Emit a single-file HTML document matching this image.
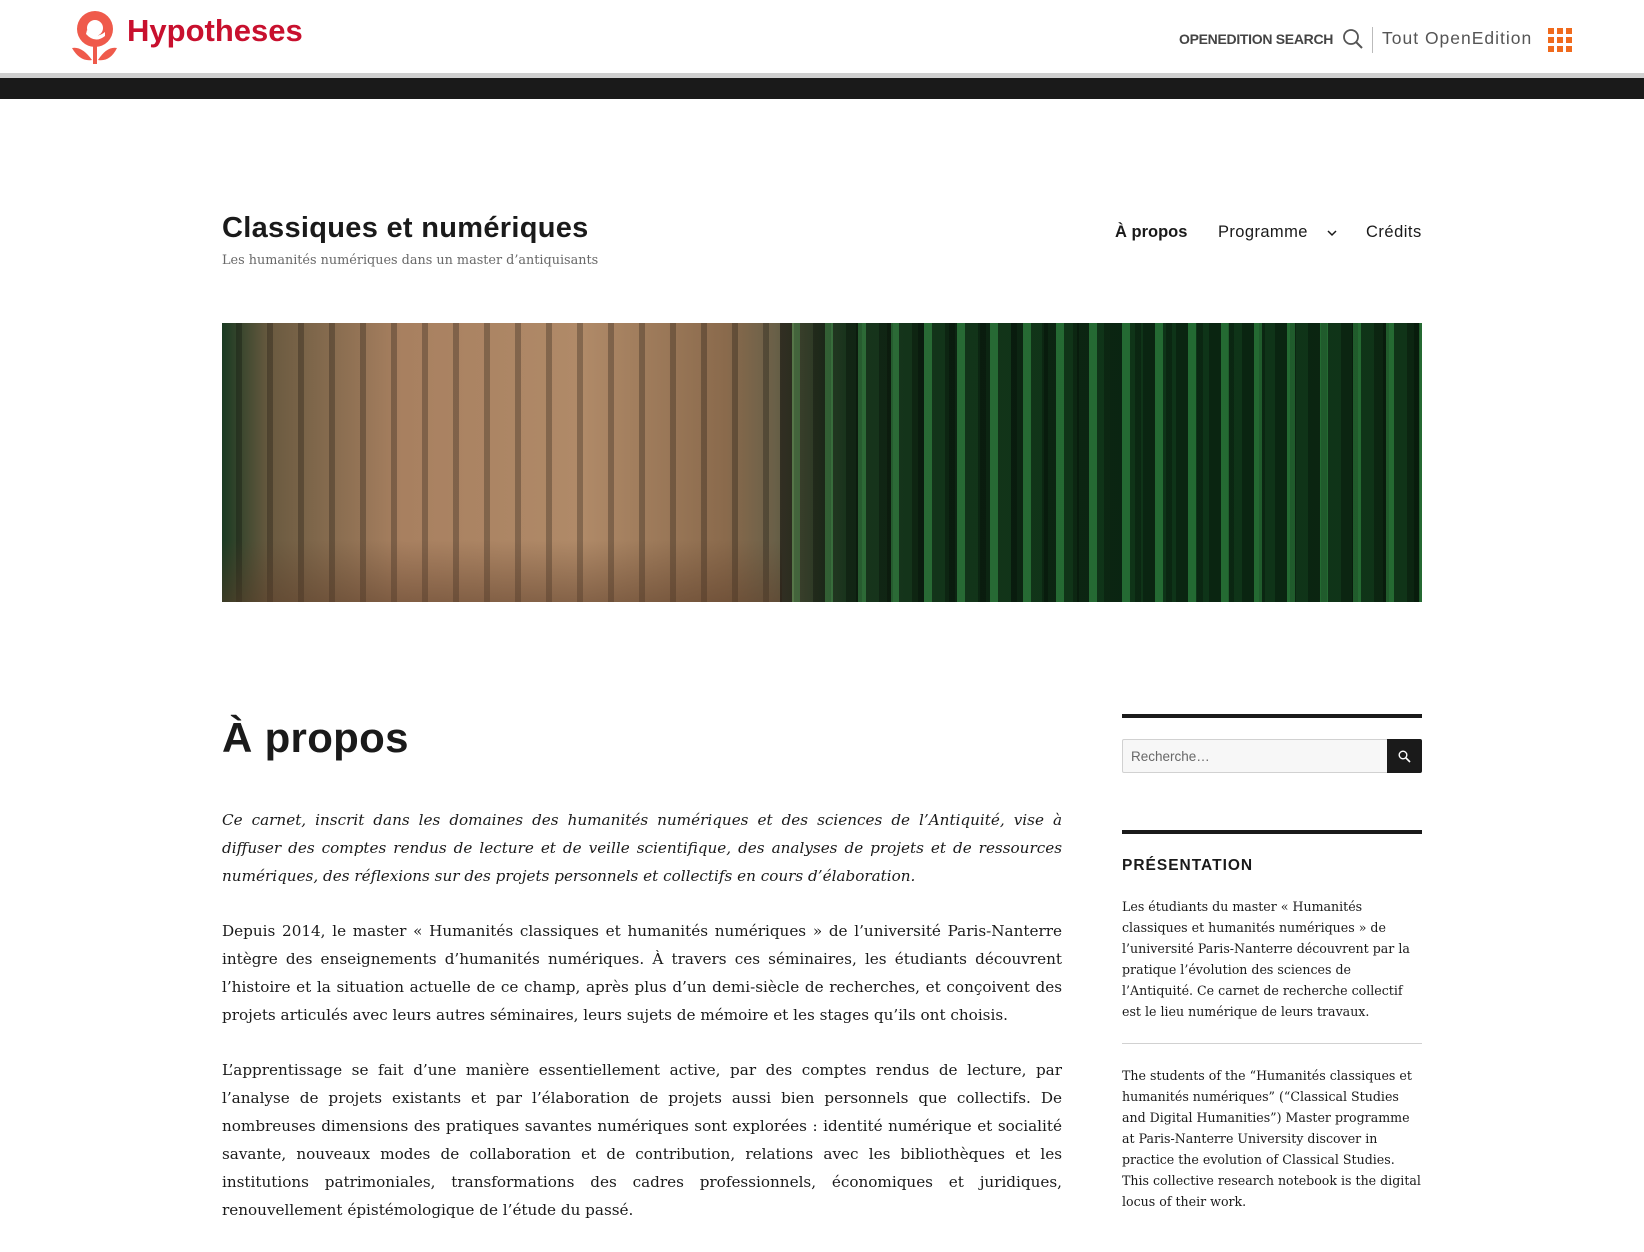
<!DOCTYPE html>
<html><head><meta charset="utf-8"><style>
*{margin:0;padding:0;box-sizing:border-box}
body{width:1644px;height:1244px;background:#fff;position:relative;overflow:hidden;font-family:"Liberation Sans",sans-serif;color:#1a1a1a}
.a{position:absolute}
.serif{font-family:"DejaVu Serif","Liberation Serif",serif}
p.b{font-size:15.2px;line-height:27.9px;text-align:justify;margin-bottom:27.5px}
.sb{font-size:12.6px;line-height:21px;color:#1a1a1a}
</style></head><body>
<svg class="a" style="left:70px;top:10px" width="50" height="55" viewBox="0 0 50 55">
<circle cx="25" cy="19" r="18" fill="#ef5a4b"/>
<circle cx="25" cy="18" r="8" fill="#fff"/>
<path d="M17 20 Q25 30 35 22 L35 26 Q25 34 16 24Z" fill="#fff"/>
<path d="M2 38 Q12 36 22 50 Q10 52 2 38Z" fill="#ef5a4b"/>
<path d="M47 38 Q37 36 28 50 Q40 52 47 38Z" fill="#ef5a4b"/>
<rect x="23" y="36" width="4" height="18" fill="#ef5a4b"/>
</svg>
<div class="a" style="left:127px;top:13px;font-size:31px;font-weight:bold;color:#c8102e">Hypotheses</div>
<div class="a" style="left:1179px;top:31px;font-size:14px;color:#444;font-weight:bold;letter-spacing:-0.3px">OPENEDITION SEARCH</div>
<svg class="a" style="left:1342px;top:28px" width="22" height="22" viewBox="0 0 22 22"><circle cx="9" cy="9" r="7" fill="none" stroke="#555" stroke-width="1.8"/><path d="M14 14l6 6" stroke="#555" stroke-width="2"/></svg>
<div class="a" style="left:1372px;top:27px;width:1px;height:26px;background:#bbb"></div>
<div class="a" style="left:1382px;top:28px;font-size:17.5px;color:#555;letter-spacing:1px">Tout OpenEdition</div>
<svg class="a" style="left:1548px;top:28px" width="25" height="25" viewBox="0 0 25 25" fill="#f06a1c">
<rect x="0" y="0" width="6" height="6"/><rect x="9" y="0" width="6" height="6"/><rect x="18" y="0" width="6" height="6"/>
<rect x="0" y="9" width="6" height="6"/><rect x="9" y="9" width="6" height="6"/><rect x="18" y="9" width="6" height="6"/>
<rect x="0" y="18" width="6" height="6"/><rect x="9" y="18" width="6" height="6"/><rect x="18" y="18" width="6" height="6"/></svg>
<div class="a" style="left:0;top:73px;width:1644px;height:5px;background:#cfcfcf"></div>
<div class="a" style="left:0;top:78px;width:1644px;height:21px;background:#1a1a1a"></div>

<div class="a" style="left:222px;top:212px;font-size:29px;font-weight:bold;letter-spacing:0.3px">Classiques et numériques</div>
<div class="a serif" style="left:222px;top:253px;font-size:12.8px;color:#686868">Les humanités numériques dans un master d’antiquisants</div>
<div class="a" style="left:1115px;top:223px;font-size:16.5px;font-weight:bold">À propos</div>
<div class="a" style="left:1218px;top:223px;font-size:16.5px;letter-spacing:0.4px">Programme</div>
<svg class="a" style="left:1327px;top:229px" width="10" height="8" viewBox="0 0 10 8"><path d="M1 2l4 4 4-4" fill="none" stroke="#1a1a1a" stroke-width="1.5"/></svg>
<div class="a" style="left:1366px;top:223px;font-size:16.5px;letter-spacing:0.5px">Crédits</div>

<div class="a" style="left:222px;top:323px;width:1200px;height:279px;background:
repeating-linear-gradient(90deg,rgba(0,0,0,0) 0 14px,rgba(0,0,0,.25) 14px 20px,rgba(0,0,0,0) 20px 31px),
linear-gradient(90deg,#1a3a22 0%,#6a5a40 4%,#a88060 15%,#b08a68 30%,#8a6a4c 42%,#6a6048 46%,#234a28 52%,#1a4a24 60%,#144a22 80%,#174a22 100%)"></div>
<div class="a" style="left:222px;top:540px;width:560px;height:62px;background:linear-gradient(180deg,rgba(90,60,40,0),rgba(90,60,40,.5))"></div>
<div class="a" style="left:780px;top:323px;width:642px;height:279px;background:repeating-linear-gradient(90deg,rgba(0,0,0,.5) 0 12px,rgba(80,200,100,.25) 12px 20px,rgba(0,0,0,.3) 20px 33px)"></div>

<div class="a" style="left:222px;top:714px;font-size:42px;font-weight:bold;letter-spacing:0.3px">À propos</div>

<div class="a serif" style="left:222px;top:807px;width:840px">
<p class="b" style="font-style:italic">Ce carnet, inscrit dans les domaines des humanités numériques et des sciences de l’Antiquité, vise à diffuser des comptes rendus de lecture et de veille scientifique, des analyses de projets et de ressources numériques, des réflexions sur des projets personnels et collectifs en cours d’élaboration.</p>
<p class="b">Depuis 2014, le master « Humanités classiques et humanités numériques » de l’université Paris-Nanterre intègre des enseignements d’humanités numériques. À travers ces séminaires, les étudiants découvrent l’histoire et la situation actuelle de ce champ, après plus d’un demi-siècle de recherches, et conçoivent des projets articulés avec leurs autres séminaires, leurs sujets de mémoire et les stages qu’ils ont choisis.</p>
<p class="b">L’apprentissage se fait d’une manière essentiellement active, par des comptes rendus de lecture, par l’analyse de projets existants et par l’élaboration de projets aussi bien personnels que collectifs. De nombreuses dimensions des pratiques savantes numériques sont explorées : identité numérique et socialité savante, nouveaux modes de collaboration et de contribution, relations avec les bibliothèques et les institutions patrimoniales, transformations des cadres professionnels, économiques et juridiques, renouvellement épistémologique de l’étude du passé.</p>
</div>

<div class="a" style="left:1122px;top:714px;width:300px;height:4px;background:#1a1a1a"></div>
<div class="a" style="left:1122px;top:739px;width:266px;height:34px;background:#f7f7f7;border:1px solid #d1d1d1;border-radius:2px 0 0 2px;font-size:13.5px;color:#686868;padding:9px 8px">Recherche…</div>
<div class="a" style="left:1387px;top:739px;width:35px;height:34px;background:#1a1a1a;border-radius:0 2px 2px 0"></div>
<svg class="a" style="left:1398px;top:750px" width="13" height="13" viewBox="0 0 13 13"><circle cx="5" cy="5" r="3.8" fill="none" stroke="#fff" stroke-width="1.4"/><path d="M8 8l4 4" stroke="#fff" stroke-width="1.6"/></svg>
<div class="a" style="left:1122px;top:830px;width:300px;height:4px;background:#1a1a1a"></div>
<div class="a" style="left:1122px;top:857px;font-size:15.5px;font-weight:bold;letter-spacing:1px">PRÉSENTATION</div>
<div class="a serif sb" style="left:1122px;top:896px;width:300px">Les étudiants du master « Humanités classiques et humanités numériques » de l’université Paris-Nanterre découvrent par la pratique l’évolution des sciences de l’Antiquité. Ce carnet de recherche collectif est le lieu numérique de leurs travaux.</div>
<div class="a" style="left:1122px;top:1043px;width:300px;height:1px;background:#d1d1d1"></div>
<div class="a serif sb" style="left:1122px;top:1065px;width:300px">The students of the “Humanités classiques et humanités numériques” (“Classical Studies and Digital Humanities”) Master programme at Paris-Nanterre University discover in practice the evolution of Classical Studies. This collective research notebook is the digital locus of their work.</div>
</body></html>
